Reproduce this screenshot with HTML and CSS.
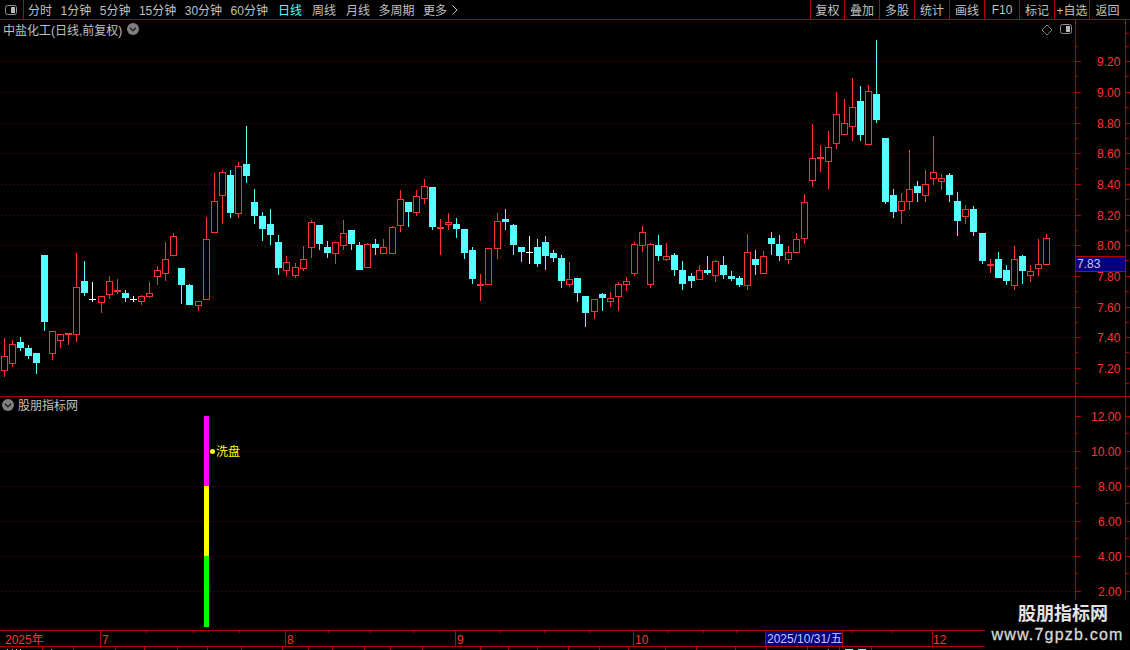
FILE: index.html
```html
<!DOCTYPE html>
<html lang="zh-CN">
<head>
<meta charset="utf-8">
<title>中盐化工 日线</title>
<link rel="stylesheet" href="styles.css">
</head>
<body>
<div class="screen">
  <header class="toolbar">
    <div class="toggle-cell">
      <svg class="panel-icon" width="12" height="10" viewBox="0 0 12 10"><rect x="0.5" y="0.5" width="11" height="9" rx="2" fill="#000" stroke="#909090"/><rect x="6" y="2" width="4" height="6" fill="#b8b8b8"/></svg>
    </div>
    <nav class="periods">
      <span>分时</span><span>1分钟</span><span>5分钟</span><span>15分钟</span><span>30分钟</span><span>60分钟</span>
      <span class="active nudge">日线</span><span class="nudge">周线</span><span class="nudge">月线</span><span>多周期</span>
      <span class="more">更多<svg class="more-arrow" width="6" height="10" viewBox="0 0 6 10"><path d="M0.5 0.5 L5 5 L0.5 9.5" fill="none" stroke="#c0c0c0"/></svg></span>
    </nav>
    <nav class="tools">
      <span>复权</span><span>叠加</span><span>多股</span><span>统计</span><span>画线</span><span>F10</span><span>标记</span><span>+自选</span><span>返回</span>
    </nav>
  </header>

  <section class="panel panel-price">
    <svg id="price" class="canvas" width="1130" height="376" viewBox="0 20 1130 376"></svg>
    <div class="title title-price">
      <span>中盐化工(日线,前复权)</span>
      <svg width="12" height="12" viewBox="0 0 12 12"><circle cx="6" cy="6" r="6" fill="#808080"/><path d="M3 4.8 L6 7.8 L9 4.8" fill="none" stroke="#222" stroke-width="1.4"/></svg>
    </div>
    <div class="view-icons">
      <svg width="12" height="12" viewBox="0 0 12 12"><path d="M6 1 L11 6 L6 11 L1 6 Z" fill="none" stroke="#808080"/></svg>
      <svg width="12" height="10" viewBox="0 0 12 10"><rect x="0.5" y="0.5" width="11" height="9" rx="2" fill="#000" stroke="#909090"/><rect x="6" y="2" width="4" height="6" fill="#b8b8b8"/></svg>
    </div>
  </section>

  <section class="panel panel-indicator">
    <svg id="indicator" class="canvas" width="1130" height="233" viewBox="0 397 1130 233"></svg>
    <div class="title title-indicator">
      <svg width="12" height="12" viewBox="0 0 12 12"><circle cx="6" cy="6" r="6" fill="#808080"/><path d="M3 4.8 L6 7.8 L9 4.8" fill="none" stroke="#222" stroke-width="1.4"/></svg>
      <span>股朋指标网</span>
    </div>
  </section>

  <svg id="dates" class="dates" width="1130" height="16" viewBox="0 631 1130 16"></svg>
  <svg id="tabs" class="tabs" width="1130" height="3" viewBox="0 647 1130 3"></svg>

  <aside class="watermark">
    <div class="wm-name">股朋指标网</div>
    <div class="wm-url">www.7gpzb.com</div>
  </aside>
</div>
<script src="chart.js"></script>
</body>
</html>
```
FILE: styles.css
```css
* { box-sizing: border-box; }

html, body {
  margin: 0;
  padding: 0;
  background: #000;
}

.screen {
  position: relative;
  display: flex;
  flex-direction: column;
  width: 1130px;
  height: 650px;
  overflow: hidden;
  background: #000;
  color: #c0c0c0;
  font-family: "Liberation Sans", "Noto Sans CJK SC", sans-serif;
  font-size: 12px;
}

.toolbar {
  display: flex;
  align-items: stretch;
  flex: none;
  height: 20px;
  border-bottom: 1px solid #b40000;
}

.toggle-cell {
  display: flex;
  align-items: center;
  justify-content: center;
  width: 24px;
  padding-right: 1px;
  padding-top: 1px;
  border-right: 1px solid #b40000;
}

.panel-icon { display: block; }

.periods {
  display: flex;
  align-items: center;
  gap: 8.5px;
  padding-left: 4px;
  white-space: nowrap;
}

.periods .active { color: #55ffff; }
.periods .nudge { margin-left: 1.5px; }

.more { display: flex; align-items: center; }
.more-arrow { margin-left: 5px; }

.tools {
  display: flex;
  margin-left: auto;
  width: 320px;
}

.tools span {
  display: flex;
  align-items: center;
  justify-content: center;
  width: 35px;
  border-left: 1px solid #b40000;
  white-space: nowrap;
}

.tools span:first-child { width: 34px; }
.tools span:last-child { width: 41px; padding-right: 5px; }

.panel {
  position: relative;
  flex: none;
  border-bottom: 1px solid #b40000;
}

.panel-price { height: 377px; }
.panel-indicator { height: 234px; }

.canvas, .dates, .tabs {
  display: block;
  flex: none;
}

.title {
  position: absolute;
  display: flex;
  align-items: center;
  gap: 5px;
  height: 18px;
  white-space: nowrap;
}

.title svg { flex: none; }

.title-price { left: 3px; top: 0; }
.title-indicator { left: 2px; top: -1px; gap: 4px; }
.title-indicator span { position: relative; top: -1px; }

.view-icons {
  position: absolute;
  top: 4px;
  left: 1041px;
  display: flex;
  align-items: flex-start;
  gap: 7px;
}

.view-icons svg { display: block; }

.canvas text, .dates text {
  font-family: "Liberation Sans", "Noto Sans CJK SC", sans-serif;
  font-size: 12px;
}

.axis-label { fill: #ff3232; }
.cursor-label { fill: #c8c8ff; }
.signal-label { fill: #ffff00; }

.watermark {
  position: absolute;
  right: 0;
  bottom: 0;
  width: 145px;
  height: 50px;
  padding-top: 4px;
  background: #000;
  color: #e4e4e4;
  font-family: "Liberation Sans", "Noto Sans CJK SC", sans-serif;
  font-weight: 700;
  text-align: center;
}

.wm-name {
  padding-left: 11px;
  font-size: 18px;
  line-height: 21px;
}

.wm-url {
  font-size: 16px;
  line-height: 19px;
  letter-spacing: 1.2px;
  font-weight: 400;
  color: #d8d8d8;
  -webkit-text-stroke: 0.3px #d8d8d8;
}
```
FILE: chart.js
```js
var NS = "http://www.w3.org/2000/svg";
var LINE = "#b40000", GRID = "#7a0000", RED = "#ff3232", CYAN = "#55ffff", WHITE = "#ffffff";

function el(parent, name, attrs, text) {
  var n = document.createElementNS(NS, name);
  for (var k in attrs) n.setAttribute(k, attrs[k]);
  if (text) n.textContent = text;
  parent.appendChild(n);
  return n;
}
function rect(p, x, y, w, h, fill) {
  return el(p, "rect", { x: x, y: y, width: w, height: h, fill: fill, "shape-rendering": "crispEdges" });
}
function hgrid(p, y, x2) {
  var d = "";
  for (var x = 1; x < x2; x += 4) d += "M" + x + " " + y + "h1v1h-1z";
  el(p, "path", { d: d, fill: GRID, "shape-rendering": "crispEdges" });
}

/* candles: type high,top,bottom,low — read off 3x crops, origin y given per group */
var groups = [
  { y: 120, d: "r655,709,752,770 r660,673,731,741 c652,667,684,693 c675,685,708,717 c699,699,729,762 c405,405,606,633 r634,634,701,720 r643,643,662,684 r640,640,644,675 r400,502,644,666 c423,484,519,528 w486,537,539,546 r529,529,548,579 r468,484,524,537 r477,511,515,522 c510,519,534,546 w528,537,539,546 r525,529,545,555 r486,520,530,534 r438,451,470,495 r366,418,461,483 r340,349,407,407 c444,444,495,552 c492,495,555,555 r544,544,557,573 r291,358,539,539 r159,244,338,338 r151,157,227,312 c151,165,279,294 r126,139,281,294 c18,132,168,189 c208,246,288,312 c276,288,327,363 c267,312,345,375" },
  { y: 170, d: "c195,216,294,315 r258,277,302,318 r279,292,317,324 r228,268,296,303 r151,157,233,264 c165,165,222,240 c213,231,249,264 r217,217,251,282 r151,190,227,240 c180,180,222,240 c216,225,300,300 r219,223,293,293 c207,222,234,255 r207,232,251,251 r168,172,251,251 r60,88,167,186 c96,96,126,171 r60,79,128,138 r27,49,86,102 c51,51,171,180 r148,172,178,255 r129,157,164,180 c144,162,177,204 c177,177,249,267 c231,240,327,342 r312,342,347,393 r235,235,344,344 r129,154,236,267 c117,147,156,180 c162,165,225,255 c231,231,246,276 w198,246,248,282 c207,231,282,291" },
  { y: 200, d: "c108,126,168,210 c150,159,174,186 c165,174,243,264 r186,238,255,261 c234,234,279,306 c288,288,339,381 r298,298,335,357 c279,282,294,333 r276,295,305,321 r246,253,290,333 r231,244,254,273 r126,133,221,228 r78,97,137,156 r129,133,254,264 c105,135,168,183 r129,169,179,183 c159,165,210,228 c183,210,252,270 c219,228,243,264 r195,211,239,240 c168,210,219,225 r180,184,227,246 c168,195,225,237 c213,228,237,243 c228,234,255,261 r102,157,257,270 c150,177,195,225 r153,169,221,221 c96,114,132,165 c105,132,168,183 r138,157,179,192" },
  { y: 30, d: "r610,628,668,668 r492,517,628,641 r282,385,452,471 r346,382,386,426 r304,352,395,477 r186,253,341,357 r207,280,314,314 r144,232,290,333 c168,213,315,333 r165,184,344,344 c30,192,270,279 c324,324,516,522 c477,495,546,564 r489,514,542,582 r360,478,515,540 c453,468,489,516 r420,463,497,516 r318,427,446,465 r432,445,455,480 c429,435,495,516 c486,513,573,618 r525,538,560,582 c528,537,606,618 c609,609,693,702 r687,703,707,729 c666,687,744,744 c705,720,753,765 r648,688,767,780 c675,678,723,762 r705,724,737,756 r627,703,716,738 r612,625,704,704" }
];
var extraSteps = [12, 24, 36, 48, 61, 73, 85, 97, 109, 121];

function candleX(i) {
  var extra = extraSteps.filter(function (s) { return s <= i; }).length;
  return 4 + 8 * i + extra;
}

function drawCandle(p, i, type, hi, top, bot, lo) {
  var x = candleX(i);
  var color = type === "r" ? RED : type === "c" ? CYAN : WHITE;
  if (type === "c") {
    rect(p, x, hi, 1, Math.max(lo - hi, 1), color);
    rect(p, x - 3, top, 7, Math.max(bot - top, 1), color);
  } else if (type === "w") {
    rect(p, x, hi, 1, Math.max(lo - hi, 1), color);
    rect(p, x - 3, top, 7, 1, color);
  } else {
    if (top > hi) rect(p, x, hi, 1, top - hi, color);
    if (lo > bot) rect(p, x, bot, 1, lo - bot, color);
    var h = Math.max(bot - top - 1, 1);
    el(p, "rect", { x: x - 2.5, y: top + 0.5, width: 6, height: h, fill: "#000", stroke: color, "shape-rendering": "crispEdges" });
  }
}

function drawAxisLines(p, y1, y2) {
  [1075, 1125].forEach(function (x) {
    rect(p, x, y1, 1, y2 - y1, LINE);
  });
}

function drawPrice() {
  var p = document.getElementById("price");
  var prices = ["9.20", "9.00", "8.80", "8.60", "8.40", "8.20", "8.00", "7.80", "7.60", "7.40", "7.20"];
  var ys = [61, 92, 123, 153, 184, 215, 245, 276, 307, 337, 368];
  ys.forEach(function (y) { hgrid(p, y, 1075); });

  drawAxisLines(p, 20, 396);
  ys.forEach(function (y, k) {
    rect(p, 1075, y, 6, 1, LINE);
    rect(p, 1125, y, 5, 1, LINE);
    var mid = Math.round(y + 15.4);
    rect(p, 1075, mid, 3, 1, LINE);
    rect(p, 1125, mid, 4, 1, LINE);
    if (k === 0) { rect(p, 1075, 46, 3, 1, LINE); rect(p, 1125, 46, 4, 1, LINE); rect(p, 1125, 33, 4, 1, LINE); }
    el(p, "text", { x: 1097, y: y + 5, "class": "axis-label" }, prices[k]);
  });

  var i = 0;
  groups.forEach(function (g) {
    g.d.split(" ").forEach(function (row) {
      var t = row.charAt(0);
      var v = row.slice(1).split(",").map(function (n) { return Math.round(g.y + Number(n) / 3); });
      drawCandle(p, i, t, v[0], v[1], v[2], v[3]);
      i++;
    });
  });

  rect(p, 1075, 256, 51, 16, LINE);
  rect(p, 1076, 257, 49, 14, "#000080");
  el(p, "text", { x: 1077, y: 268, "class": "cursor-label" }, "7.83");
}

function drawIndicator() {
  var p = document.getElementById("indicator");
  var ys = [416, 451, 486, 521, 556, 591];
  var labels = ["12.00", "10.00", "8.00", "6.00", "4.00", "2.00"];
  ys.forEach(function (y, k) { if (k > 0) hgrid(p, y, 1075); });
  drawAxisLines(p, 397, 630);
  ys.forEach(function (y, k) {
    rect(p, 1075, y, 6, 1, LINE);
    rect(p, 1125, y, 5, 1, LINE);
    rect(p, 1075, y + 17, 3, 1, LINE);
    rect(p, 1125, y + 17, 4, 1, LINE);
    var w = labels[k].length === 5 ? 1091 : 1098;
    el(p, "text", { x: w, y: y + 5, "class": "axis-label" }, labels[k]);
  });
  rect(p, 204, 416, 5, 70, "#ff00ff");
  rect(p, 204, 486, 5, 70, "#ffff00");
  rect(p, 204, 556, 5, 71, "#00ff00");
  el(p, "circle", { cx: 212.5, cy: 451.5, r: 2.5, fill: "#ffff00" });
  el(p, "text", { x: 216, y: 456, "class": "signal-label" }, "洗盘");
}

function drawDates() {
  var p = document.getElementById("dates");
  [146, 193, 239, 328, 370, 413, 500, 544, 589, 667, 703, 736, 852, 892].forEach(function (x) {
    rect(p, x, 631, 1, 2, LINE);
  });
  [100, 285, 455, 633, 932].forEach(function (x) { rect(p, x, 631, 1, 15, LINE); });
  rect(p, 0, 646, 1130, 1, LINE);
  [[5, "2025年"], [102, "7"], [287, "8"], [457, "9"], [635, "10"], [933, "12"]].forEach(function (d) {
    el(p, "text", { x: d[0], y: 644, "class": "axis-label" }, d[1]);
  });
  rect(p, 765, 631, 78, 15, LINE);
  rect(p, 766, 631, 76, 15, "#000080");
  el(p, "text", { x: 767, y: 643, "class": "cursor-label" }, "2025/10/31/五");
}

function drawTabs() {
  var p = document.getElementById("tabs");
  [42, 73, 115, 144, 177, 207, 241, 282, 308, 332, 364, 390, 422, 480, 508, 537, 568, 599, 628, 665, 696, 735, 766, 807, 839, 871].forEach(function (x) {
    rect(p, x, 647, 1, 3, LINE);
  });
  [[7, 1], [12, 1], [16, 1], [20, 1], [51, 1], [828, 1]].forEach(function (m) {
    rect(p, m[0], 649, m[1], 1, "#c0c0c0");
  });
  rect(p, 845, 649, 8, 1, CYAN);
  rect(p, 858, 649, 8, 1, CYAN);
}

drawPrice();
drawIndicator();
drawDates();
drawTabs();
```
